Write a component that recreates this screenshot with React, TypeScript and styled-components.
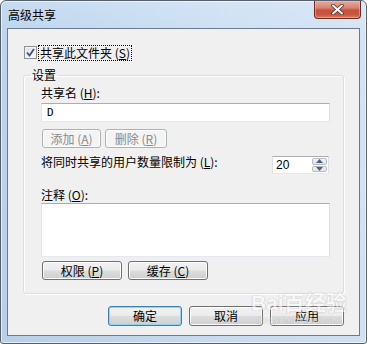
import React from 'react';
import styled, { createGlobalStyle, css } from 'styled-components';

const GlobalStyle = createGlobalStyle`
  html, body {
    margin: 0;
    padding: 0;
    background: #ffffff;
  }
  body {
    width: 367px;
    height: 344px;
    overflow: hidden;
    font-family: "Noto Sans CJK SC", "Noto Sans", sans-serif;
    font-size: 12px;
    color: #000;
  }
`;

const Window = styled.div`
  position: relative;
  box-sizing: border-box;
  width: 367px;
  height: 344px;
  display: flex;
  flex-direction: column;
  border: 1px solid #56606c;
  border-radius: 6px 6px 3px 3px;
  background:
    linear-gradient(90deg, rgba(255, 255, 255, 0) 0%, rgba(255, 255, 255, 0.25) 60%, rgba(255, 255, 255, 0.35) 100%),
    linear-gradient(180deg, #c6dbf1 0%, #bcd4ed 12%, #b7cfe9 100%);
  box-shadow: inset 0 0 0 1px rgba(255, 255, 255, 0.6);
  overflow: hidden;
`;

const TitleBar = styled.div`
  height: 27px;
  flex: none;
  display: flex;
  justify-content: space-between;
  align-items: flex-start;
`;

const Title = styled.div`
  margin: 7px 0 0 7px;
  line-height: 14px;
  font-size: 12px;
  color: #000;
`;

const CloseButton = styled.div`
  box-sizing: border-box;
  width: 47px;
  height: 18px;
  margin-right: 5px;
  display: flex;
  align-items: center;
  justify-content: center;
  border: 1px solid #6b2a22;
  border-top: none;
  border-radius: 0 0 4px 4px;
  background: linear-gradient(180deg, #e8a99b 0%, #d98372 40%, #c7503d 55%, #c9563f 80%, #d77d5c 100%);
  box-shadow: inset 0 0 0 1px rgba(255, 200, 190, 0.45);
`;

const Client = styled.div`
  flex: 1;
  display: flex;
  flex-direction: column;
  margin: 0 6px 7px 6px;
  padding: 17px 15px 9px 15px;
  border: 1px solid #6c7b8b;
  background: #f0f0f0;
`;

const CheckRow = styled.div`
  display: flex;
  align-items: center;
  height: 13px;
  margin-left: 1px;
  gap: 1px;
`;

const CheckBox = styled.div`
  box-sizing: border-box;
  width: 13px;
  height: 13px;
  border: 1px solid #8e8f8f;
  background: linear-gradient(135deg, #dcdcdc 0%, #f2f2f2 60%, #ffffff 100%);
  box-shadow: inset 0 0 0 1px #f4f4f4;
  display: flex;
  align-items: center;
  justify-content: center;
`;

const FocusLabel = styled.span`
  line-height: 14px;
  padding: 0 1px;
  border: 1px dotted #000;
`;

const Group = styled.fieldset`
  margin: 9px 0 0 0;
  min-width: 0;
  padding: 4px 13px 13px 17px;
  border: 1px solid #d5dfe5;
  border-radius: 3px;
  box-shadow: inset 1px 1px 0 #ffffff, 1px 1px 0 #ffffff;
  display: flex;
  flex-direction: column;
`;

const Legend = styled.legend`
  padding: 0 2px;
  margin-left: -11px;
  line-height: 14px;
`;

const FieldLabel = styled.div<{ $top?: number }>`
  line-height: 14px;
  margin-top: ${p => p.$top ?? 0}px;
`;

const TextBox = styled.div<{ $height: number; $top: number }>`
  box-sizing: border-box;
  height: ${p => p.$height}px;
  margin-top: ${p => p.$top}px;
  border: 1px solid #abadb3;
  border-color: #abadb3 #dbdfe6 #e3e9ef #e2e3ea;
  background: #fff;
  padding: 2px 5px;
  font-family: "DejaVu Sans Mono", "Liberation Mono", monospace;
  font-size: 11px;
  line-height: 13px;
`;

const ButtonRow = styled.div<{ $gap: number; $top: number; $end?: boolean }>`
  display: flex;
  gap: ${p => p.$gap}px;
  margin-top: ${p => p.$top}px;
  margin-left: ${p => (p.$end ? 0 : 1)}px;
  justify-content: ${p => (p.$end ? 'flex-end' : 'flex-start')};
`;

type Variant = 'normal' | 'default' | 'disabled';

const Button = styled.div<{ $w: number; $h: number; $variant?: Variant }>`
  box-sizing: border-box;
  width: ${p => p.$w}px;
  height: ${p => p.$h}px;
  display: flex;
  align-items: center;
  justify-content: center;
  border: 1px solid #707070;
  border-radius: 3px;
  background: linear-gradient(180deg, #f2f2f2 0%, #ebebeb 48%, #dddddd 52%, #cfcfcf 100%);
  box-shadow: inset 0 0 0 1px #fcfcfc;
  line-height: 14px;
  color: #000;
  ${p =>
    p.$variant === 'default' &&
    css`
      border-color: #3c7fb1;
      box-shadow: inset 0 0 0 1px #8fd3f5;
    `}
  ${p =>
    p.$variant === 'disabled' &&
    css`
      border-color: #adb2b5;
      background: #f4f4f4;
      box-shadow: inset 0 0 0 1px #fcfcfc;
      color: #8a8a8a;
    `}
`;

const LimitRow = styled.div`
  display: flex;
  justify-content: space-between;
  align-items: flex-start;
  margin-top: 7px;
  height: 19px;
`;

const Spinner = styled.div`
  box-sizing: border-box;
  width: 57px;
  height: 18px;
  margin: 1px 1px 0 0;
  display: flex;
  border: 1px solid #abadb3;
  border-color: #abadb3 #dbdfe6 #e3e9ef #e2e3ea;
  background: #fff;
`;

const SpinValue = styled.div`
  flex: 1;
  padding-left: 3px;
  font-family: "Liberation Sans", Arial, sans-serif;
  font-size: 12px;
  line-height: 16px;
`;

const SpinButtons = styled.div`
  width: 15px;
  display: flex;
  flex-direction: column;
  gap: 1px;
  padding: 1px 1px 1px 0;
`;

const SpinArrow = styled.div`
  flex: 1;
  box-sizing: border-box;
  border: 1px solid #b9bcc0;
  border-radius: 2px;
  background: linear-gradient(180deg, #f3f3f3 0%, #e3e3e3 100%);
  display: flex;
  align-items: center;
  justify-content: center;
`;

const Key = styled.span`
  text-decoration: underline;
`;

const Watermark = styled.div`
  position: absolute;
  left: 250px;
  top: 290px;
  display: flex;
  flex-direction: column;
  align-items: center;
  pointer-events: none;
  opacity: 0.55;
  color: #ffffff;
  text-shadow: 0 0 1px #9a9a9a, 0 0 1px #9a9a9a;
`;

const WatermarkMain = styled.div`
  display: flex;
  align-items: center;
  font-family: "Liberation Sans", Arial, "Noto Sans CJK SC", sans-serif;
  font-size: 21px;
  font-weight: bold;
  line-height: 24px;
`;

const WatermarkSub = styled.div`
  font-family: "Liberation Sans", Arial, sans-serif;
  font-size: 9px;
  line-height: 10px;
  letter-spacing: 0.5px;
`;

const App: React.FC = () => {
  return (
    <>
      <GlobalStyle />
      <Window>
        <TitleBar>
          <Title>高级共享</Title>
          <CloseButton>
            <svg width="13" height="11" viewBox="0 0 13 11">
              <path d="M2 1.5 L11 9.5 M11 1.5 L2 9.5" stroke="#5a2a24" strokeWidth="3.6" strokeLinecap="round" />
              <path d="M2 1.5 L11 9.5 M11 1.5 L2 9.5" stroke="#ffffff" strokeWidth="2" strokeLinecap="round" />
            </svg>
          </CloseButton>
        </TitleBar>

        <Client>
          <CheckRow>
            <CheckBox>
              <svg width="9" height="9" viewBox="0 0 9 9">
                <path d="M1 4.5 L3.5 7.5 L8 1" stroke="#3a4f8f" strokeWidth="1.8" fill="none" />
              </svg>
            </CheckBox>
            <FocusLabel>
              共享此文件夹 (<Key>S</Key>)
            </FocusLabel>
          </CheckRow>

          <Group>
            <Legend>设置</Legend>
            <FieldLabel>
              共享名 (<Key>H</Key>):
            </FieldLabel>
            <TextBox $height={19} $top={3}>D</TextBox>
            <ButtonRow $gap={4} $top={7}>
              <Button $w={59} $h={19} $variant="disabled">添加 (<Key>A</Key>)</Button>
              <Button $w={62} $h={19} $variant="disabled">删除 (<Key>R</Key>)</Button>
            </ButtonRow>
            <LimitRow>
              <FieldLabel>
                将同时共享的用户数量限制为 (<Key>L</Key>):
              </FieldLabel>
              <Spinner>
                <SpinValue>20</SpinValue>
                <SpinButtons>
                  <SpinArrow>
                    <svg width="7" height="4" viewBox="0 0 7 4">
                      <path d="M0 4 L3.5 0 L7 4 Z" fill="#4d6185" />
                    </svg>
                  </SpinArrow>
                  <SpinArrow>
                    <svg width="7" height="4" viewBox="0 0 7 4">
                      <path d="M0 0 L3.5 4 L7 0 Z" fill="#4d6185" />
                    </svg>
                  </SpinArrow>
                </SpinButtons>
              </Spinner>
            </LimitRow>
            <FieldLabel $top={14}>
              注释 (<Key>O</Key>):
            </FieldLabel>
            <TextBox $height={54} $top={1} />
            <ButtonRow $gap={6} $top={4}>
              <Button $w={80} $h={19}>权限 (<Key>P</Key>)</Button>
              <Button $w={80} $h={19}>缓存 (<Key>C</Key>)</Button>
            </ButtonRow>
          </Group>

          <ButtonRow $gap={7} $top={12} $end>
            <Button $w={74} $h={20} $variant="default">确定</Button>
            <Button $w={74} $h={20}>取消</Button>
            <Button $w={74} $h={20}>应用</Button>
          </ButtonRow>
        </Client>

        <Watermark>
          <WatermarkMain>Bai百经验</WatermarkMain>
          <WatermarkSub>jingyan.baidu.com</WatermarkSub>
        </Watermark>
      </Window>
    </>
  );
};

export default App;
